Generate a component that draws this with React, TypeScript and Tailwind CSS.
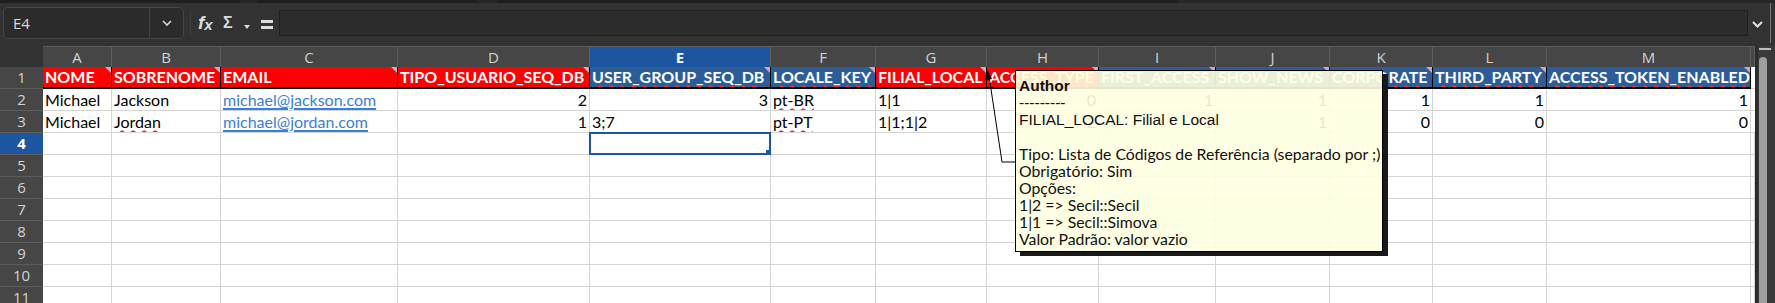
const W = ['w-[69px]', 'w-[109px]', 'w-[177px]', 'w-[192px]', 'w-[181px]', 'w-[105px]', 'w-[111px]', 'w-[112px]', 'w-[117px]', 'w-[114px]', 'w-[103px]', 'w-[114px]', 'w-[204px]', 'w-[4px]'];
const letters = ['A', 'B', 'C', 'D', 'E', 'F', 'G', 'H', 'I', 'J', 'K', 'L', 'M', ''];

const RED = 'bg-[#ff0000]';
const BLUE = 'bg-[#2c5d98]';

const head = [
  { t: 'NOME', bg: RED },
  { t: 'SOBRENOME', bg: RED },
  { t: 'EMAIL', bg: RED },
  { t: 'TIPO_USUARIO_SEQ_DB', bg: RED },
  { t: 'USER_GROUP_SEQ_DB', bg: BLUE, wavy: true },
  { t: 'LOCALE_KEY', bg: BLUE, wavy: true },
  { t: 'FILIAL_LOCAL', bg: RED },
  { t: 'ACCESS_TYPE', bg: RED },
  { t: 'FIRST_ACCESS', bg: BLUE },
  { t: 'SHOW_NEWS', bg: BLUE },
  { t: 'CORPORATE', bg: BLUE, wavy: true },
  { t: 'THIRD_PARTY', bg: BLUE, wavy: true },
  { t: 'ACCESS_TOKEN_ENABLED', bg: BLUE, wavy: true },
];

type C = { t: string; r?: boolean; wavy?: boolean; link?: boolean };

const data: C[][] = [
  [{ t: 'Michael' }, { t: 'Jackson' }, { t: 'michael@jackson.com', link: true }, { t: '2', r: true }, { t: '3', r: true }, { t: 'pt-BR', wavy: true }, { t: '1|1' }, { t: '0', r: true }, { t: '1', r: true }, { t: '1', r: true }, { t: '1', r: true }, { t: '1', r: true }, { t: '1', r: true }],
  [{ t: 'Michael' }, { t: 'Jordan', wavy: true }, { t: 'michael@jordan.com', link: true }, { t: '1', r: true }, { t: '3;7' }, { t: 'pt-PT', wavy: true }, { t: '1|1;1|2' }, { t: '2', r: true }, { t: '1', r: true }, { t: '1', r: true }, { t: '0', r: true }, { t: '0', r: true }, { t: '0', r: true }],
];

const cellFont = "font-['Lato',sans-serif] text-[16px]";
const wavy = 'underline decoration-[#ff2a2a] decoration-wavy decoration-2 underline-offset-[2px]';

function Tri() {
  return <span className="absolute right-0 top-0 h-0 w-0 border-l-[6px] border-t-[6px] border-l-transparent border-t-[#c9a9c6]" />;
}

function RowHead({ n, sel }: { n: number; sel?: boolean }) {
  return (
    <div className={`flex w-[43px] shrink-0 items-center justify-center border-b border-[#5d5d5d] font-['Open_Sans',sans-serif] text-[15px] ${sel ? 'bg-[#1c56a0] font-bold text-white' : 'bg-[#464646] text-[#d2d2d2]'}`}>
      {n}
    </div>
  );
}

export default function App() {
  return (
    <div className="relative h-[303px] w-[1775px] overflow-hidden bg-[#323232]">
      {/* toolbar remnant */}
      <div className="flex h-[3px] bg-[#262626]">
        <div className="w-[240px] bg-[#1e1e1e]" />
        <div className="ml-[17px] w-[220px] bg-[#1e1e1e]" />
        <div className="ml-[20px] w-[680px] bg-[#1e1e1e]" />
      </div>

      {/* formula bar */}
      <div className="flex h-[43px] items-start text-[#dcdcdc]">
        <div className="ml-[3px] mt-[4px] flex h-[32px] w-[181px] rounded-[5px] border border-[#464646] bg-[#2b2b2b]">
          <div className="flex w-[146px] items-center border-r border-[#464646] pl-[9px] font-['Open_Sans',sans-serif] text-[15px]">E4</div>
          <div className="flex flex-1 items-center justify-center">
            <svg width="10" height="6" viewBox="0 0 10 6"><path d="M1 1l4 4 4-4" fill="none" stroke="#dcdcdc" strokeWidth="1.6" /></svg>
          </div>
        </div>
        <div className="ml-[6px] mt-[7px] h-[26px] w-px bg-[#3e3e3e]" />
        <div className="ml-[7px] mt-[10px] flex w-[17px] items-end font-['Liberation_Sans',sans-serif] font-bold italic leading-none">
          <span className="text-[19px]">f</span>
          <span className="text-[15px]">x</span>
        </div>
        <div className="ml-[8px] mt-[12px] font-['Liberation_Sans',sans-serif] text-[16px] font-bold leading-none">Σ</div>
        <div className="ml-[11px] mt-[22px] h-0 w-0 border-x-[3px] border-t-[4px] border-x-transparent border-t-[#dcdcdc]" />
        <div className="ml-[11px] mt-[17px] flex w-[12px] flex-col gap-[3px]">
          <div className="h-[3px] bg-[#dcdcdc]" />
          <div className="h-[3px] bg-[#dcdcdc]" />
        </div>
        <div className="ml-[6px] mt-[7px] h-[26px] w-[1469px] border border-[#1f1f1f] bg-[#2c2c2c]" />
        <div className="ml-[4px] mt-[18px]">
          <svg width="11" height="7" viewBox="0 0 11 7"><path d="M1 1l4.5 4.5L10 1" fill="none" stroke="#e0e0e0" strokeWidth="2" /></svg>
        </div>
        <div className="ml-[7px] mt-0 h-[40px] w-px bg-[#7a7a7a]" />
      </div>

      {/* sheet */}
      <div className="flex">
        <div className="flex w-[1755px] flex-col">
          {/* column letters */}
          <div className="flex h-[21px]">
            <div className="w-[43px] shrink-0 bg-[#323232]" />
            {letters.map((l, i) => (
              <div
                key={i}
                className={`${W[i]} flex shrink-0 items-center justify-center border-r border-t border-[#5d5d5d] font-['Open_Sans',sans-serif] text-[15px] ${l === 'E' ? 'bg-[#1c56a0] font-bold text-white' : 'bg-[#464646] text-[#d2d2d2]'}`}
              >
                {l}
              </div>
            ))}
          </div>

          {/* row 1 */}
          <div className="flex h-[22px]">
            <RowHead n={1} />
            {head.map((h, i) => (
              <div key={i} className={`${W[i]} ${h.bg} relative shrink-0 overflow-hidden whitespace-nowrap border-b-2 border-r border-black px-[2px] ${cellFont} font-bold leading-[19px] text-white`}>
                <span className={h.wavy ? wavy : ''}>{h.t}</span>
                <Tri />
              </div>
            ))}
            <div className="w-[4px] shrink-0 border-b border-[#d4d4d4] bg-white" />
          </div>

          {/* data rows */}
          {data.map((row, ri) => (
            <div key={ri} className="flex h-[22px]">
              <RowHead n={ri + 2} />
              {row.map((c, i) => (
                <div key={i} className={`${W[i]} shrink-0 overflow-hidden whitespace-nowrap border-b border-r border-[#d4d4d4] bg-white px-[2px] ${cellFont} leading-[21px] text-black ${c.r ? 'text-right' : ''}`}>
                  <span
                    className={
                      c.link
                        ? 'text-[#3a7fd8] underline decoration-[#3a7fd8] decoration-2 underline-offset-[2px]'
                        : c.wavy
                          ? wavy
                          : ''
                    }
                  >
                    {c.t}
                  </span>
                </div>
              ))}
              <div className="w-[4px] shrink-0 border-b border-[#d4d4d4] bg-white" />
            </div>
          ))}

          {/* empty rows */}
          {[4, 5, 6, 7, 8, 9, 10, 11].map((n) => (
            <div key={n} className="flex h-[22px] shrink-0">
              <RowHead n={n} sel={n === 4} />
              {W.map((w, i) => (
                <div key={i} className={`${w} relative shrink-0 border-b border-r border-[#d4d4d4] bg-white`}>
                  {n === 4 && i === 4 && (
                    <div className="absolute -left-[1px] -top-[1px] h-[23px] w-[182px] border-2 border-[#1c56a0]">
                      <span className="absolute -bottom-[3px] -right-[3px] h-[6px] w-[6px] bg-[#1c56a0]" />
                    </div>
                  )}
                </div>
              ))}
            </div>
          ))}
        </div>

        {/* vertical scrollbar */}
        <div className="relative w-[20px] border-l-[3px] border-[#2b2b2b] bg-[#3a3a3a]">
          <div className="ml-[1px] mt-[2px] h-[2px] w-[12px] bg-[#bdbdbd]" />
          <div className="ml-[1px] mt-[7px] h-[260px] w-[8px] rounded-t-[4px] bg-[#9e9e9e]" />
        </div>
      </div>

      {/* comment arrow */}
      <svg className="absolute left-0 top-0" width="1775" height="303">
        <path d="M989 76 L1002 162 L1015 162" fill="none" stroke="#000" strokeWidth="1" />
        <path d="M987.5 70 L984.5 80 L992 79 Z" fill="#000" />
      </svg>

      {/* comment box */}
      <div className="absolute left-[1015px] top-[70px] h-[182px] w-[368px] border border-black bg-[#ffffe1]/90 pl-[3px] pt-[6px] leading-[17px] text-[#111] shadow-[5px_4px_0_#1a1a1a]">
        <div className="font-['Liberation_Sans',sans-serif] text-[15.5px] font-bold">Author</div>
        <div className="font-['Liberation_Sans',sans-serif] text-[15.5px]">---------</div>
        <div className="font-['Liberation_Sans',sans-serif] text-[15.5px]">FILIAL_LOCAL: Filial e Local</div>
        <div className="h-[17px]" />
        <div className="whitespace-nowrap font-['Lato',sans-serif] text-[15.8px]">
          <div>Tipo: Lista de Códigos de Referência (separado por ;)</div>
          <div>Obrigatório: Sim</div>
          <div>Opções:</div>
          <div>1|2 =&gt; Secil::Secil</div>
          <div>1|1 =&gt; Secil::Simova</div>
          <div>Valor Padrão: valor vazio</div>
        </div>
      </div>
    </div>
  );
}
